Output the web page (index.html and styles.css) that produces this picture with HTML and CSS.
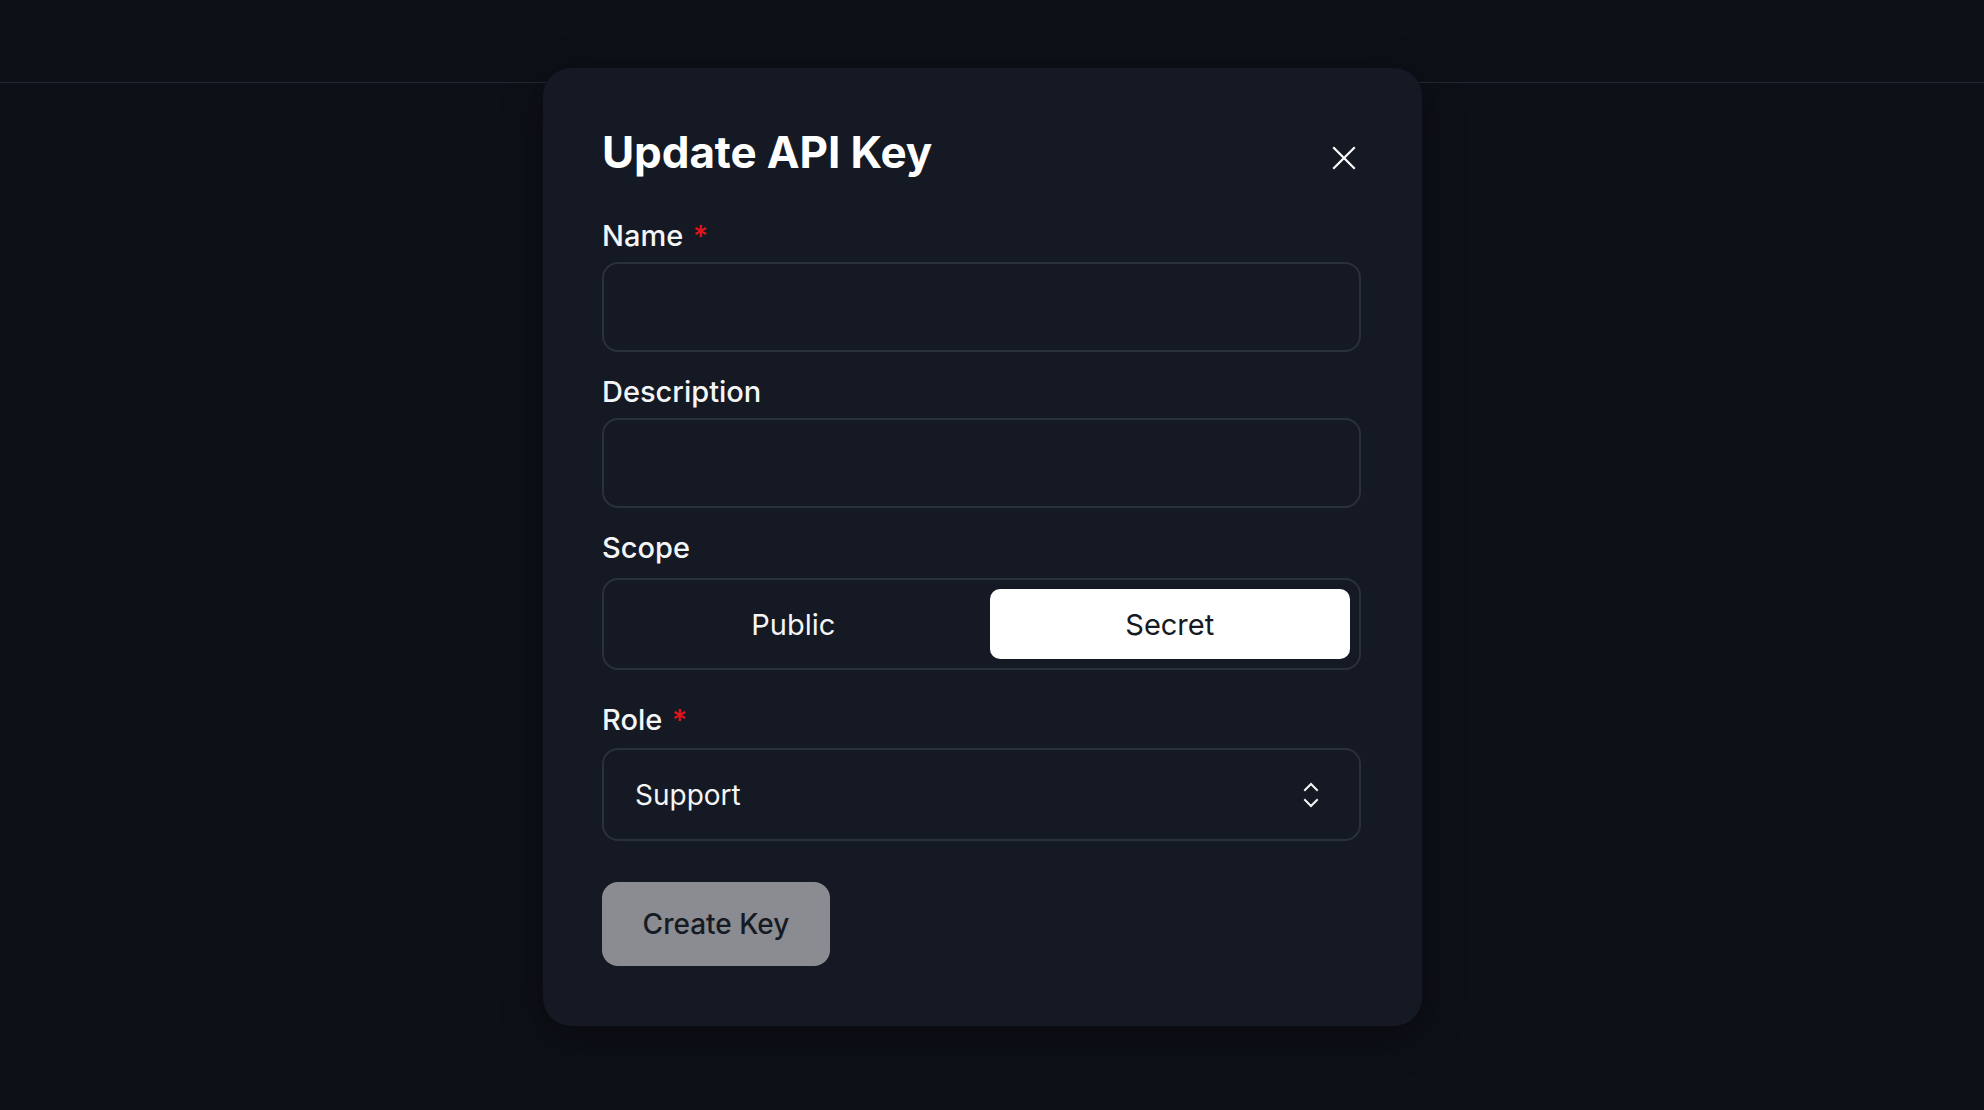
FILE: index.html
```html
<!DOCTYPE html>
<html lang="en">
<head>
<meta charset="utf-8">
<title>Update API Key</title>
<link rel="stylesheet" href="styles.css">
</head>
<body>
<header class="topbar"></header>
<div class="overlay">
  <div class="modal" role="dialog" aria-labelledby="dlg-title">
    <div class="modal-header">
      <h2 id="dlg-title" class="modal-title">Update API Key</h2>
      <button class="close-btn" type="button" aria-label="Close">
        <svg width="24" height="24" viewBox="0 0 24 24" fill="none" stroke="currentColor" stroke-width="2.2" stroke-linecap="square"><path d="M2 2 L22 22 M22 2 L2 22"/></svg>
      </button>
    </div>
    <form class="form">
      <div class="field">
        <label class="label">Name <span class="req">*</span></label>
        <input class="input" type="text">
      </div>
      <div class="field">
        <label class="label">Description</label>
        <input class="input" type="text">
      </div>
      <div class="field field-scope">
        <label class="label">Scope</label>
        <div class="segmented">
          <button type="button" class="seg">Public</button>
          <button type="button" class="seg seg-active">Secret</button>
        </div>
      </div>
      <div class="field field-role">
        <label class="label">Role <span class="req">*</span></label>
        <div class="select">
          <span class="select-value">Support</span>
          <svg class="select-icon" width="16" height="28" viewBox="0 0 16 28" fill="none" stroke="currentColor" stroke-width="2" stroke-linecap="square" stroke-linejoin="miter"><path d="M2 9 L8 3 L14 9"/><path d="M2 19 L8 25 L14 19"/></svg>
        </div>
      </div>
      <div class="actions">
        <button type="button" class="btn-primary">Create Key</button>
      </div>
    </form>
  </div>
</div>
</body>
</html>
```
FILE: styles.css
```css
* { box-sizing: border-box; }
html, body { margin: 0; padding: 0; }
body {
  background: #0d1017;
  font-family: Inter, "Noto Sans", "Liberation Sans", sans-serif;
  color: #f4f5f7;
  width: 1984px;
  height: 1110px;
  overflow: hidden;
  position: relative;
}
.topbar {
  height: 83px;
  border-bottom: 1px solid #232733;
}
.overlay {
  position: absolute;
  inset: 0;
}
.modal {
  position: absolute;
  left: 543px;
  top: 68px;
  width: 879px;
  height: 958px;
  background: #151923;
  border-radius: 28px;
  padding: 60px 61px 60px 59px;
  box-shadow: 0 10px 40px rgba(0,0,0,0.35);
}
.modal-header {
  display: flex;
  justify-content: space-between;
  align-items: flex-start;
}
.modal-title {
  margin: 0;
  font-size: 44px;
  line-height: 48px;
  font-weight: 700;
  letter-spacing: -0.1px;
  color: #ffffff;
}
.close-btn {
  margin-top: 18px;
  width: 24px;
  height: 24px;
  margin-right: 5px;
  padding: 0;
  border: 0;
  background: transparent;
  color: #ffffff;
  display: flex;
}
.form {
  display: flex;
  flex-direction: column;
  margin-top: 40px;
}
.field {
  display: flex;
  flex-direction: column;
  margin-bottom: 20px;
}
.label {
  font-size: 29px;
  line-height: 40px;
  font-weight: 500;
  color: #f4f5f7;
  margin-bottom: 6px;
}
.req { color: #e3141b; margin-left: 2px; }
.input {
  height: 90px;
  width: 100%;
  background: #151923;
  border: 2px solid #2b303d;
  border-radius: 16px;
  font: inherit;
  color: #fff;
  outline: none;
}
.field-scope .label { margin-bottom: 10px; }
.field-scope { margin-bottom: 30px; }
.segmented {
  height: 92px;
  border: 2px solid #2b303d;
  border-radius: 16px;
  padding: 9px 9px;
  display: grid;
  grid-template-columns: 1fr 1fr;
  gap: 16px;
}
.seg {
  border: 0;
  background: transparent;
  border-radius: 10px;
  font-family: inherit;
  font-size: 29px;
  font-weight: 400;
  color: #f4f5f7;
  padding: 0;
}
.seg-active {
  background: #ffffff;
  color: #151923;
}
.field-role .label { margin-bottom: 8px; }
.field-role { margin-bottom: 41px; }
.select {
  height: 93px;
  border: 2px solid #2b303d;
  border-radius: 16px;
  display: flex;
  align-items: center;
  justify-content: space-between;
  padding: 0 40px 0 31px;
}
.select-value {
  font-size: 28px;
  font-weight: 400;
  color: #f4f5f7;
}
.select-icon { color: #f4f5f7; }
.actions { display: flex; }
.btn-primary {
  width: 228px;
  height: 84px;
  border: 0;
  border-radius: 16px;
  background: #8b8c91;
  color: #161a24;
  font-family: inherit;
  font-size: 28px;
  font-weight: 500;
  padding: 0;
}
```
